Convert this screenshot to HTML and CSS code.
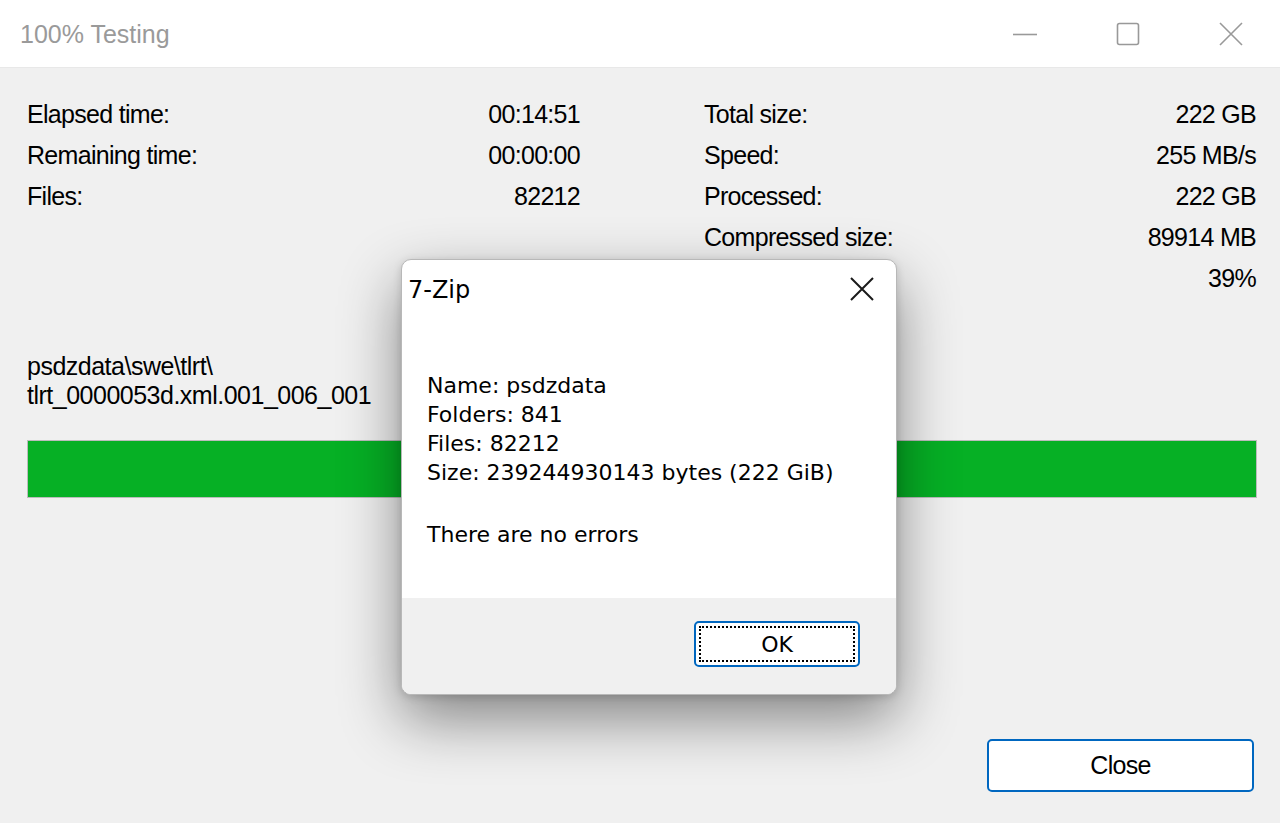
FILE: index.html
```html
<!DOCTYPE html>
<html>
<head>
<meta charset="utf-8">
<link rel="stylesheet" href="styles.css">
</head>
<body>
<div class="window">
  <div class="titlebar">
    <div class="title">100% Testing</div>
    <div class="controls">
      <span class="ctl">
        <svg width="26" height="26" viewBox="0 0 26 26"><line x1="1" y1="13.5" x2="25" y2="13.5" stroke="#999" stroke-width="1.6"/></svg>
      </span>
      <span class="ctl">
        <svg width="26" height="26" viewBox="0 0 26 26"><rect x="2.5" y="2.5" width="21" height="21" rx="2" fill="none" stroke="#999" stroke-width="1.6"/></svg>
      </span>
      <span class="ctl">
        <svg width="26" height="26" viewBox="0 0 26 26"><path d="M2 2 L24 24 M24 2 L2 24" stroke="#999" stroke-width="1.6" fill="none"/></svg>
      </span>
    </div>
  </div>
  <div class="content">
    <div class="stats">
      <div class="col">
        <div class="row"><span>Elapsed time:</span><span>00:14:51</span></div>
        <div class="row"><span>Remaining time:</span><span>00:00:00</span></div>
        <div class="row"><span>Files:</span><span>82212</span></div>
      </div>
      <div class="col">
        <div class="row"><span>Total size:</span><span>222 GB</span></div>
        <div class="row"><span>Speed:</span><span>255 MB/s</span></div>
        <div class="row"><span>Processed:</span><span>222 GB</span></div>
        <div class="row"><span>Compressed size:</span><span>89914 MB</span></div>
        <div class="row"><span></span><span>39%</span></div>
      </div>
    </div>
    <div class="path">psdzdata\swe\tlrt\<br>tlrt_0000053d.xml.001_006_001</div>
    <div class="progress"><div class="fill"></div></div>
    <div class="footer">
      <button class="btn close-btn">Close</button>
    </div>
  </div>
</div>

<div class="dialog">
  <div class="dlg-title">
    <span class="dlg-name">7-Zip</span>
    <svg class="dlg-x" width="26" height="26" viewBox="0 0 26 26"><path d="M2 2 L24 24 M24 2 L2 24" stroke="#1a1a1a" stroke-width="2" fill="none"/></svg>
  </div>
  <div class="dlg-body">
    <div>Name: psdzdata</div>
    <div>Folders: 841</div>
    <div>Files: 82212</div>
    <div>Size: 239244930143 bytes (222 GiB)</div>
    <div class="msg">There are no errors</div>
  </div>
  <div class="dlg-footer">
    <button class="btn ok-btn"><span class="focus">OK</span></button>
  </div>
</div>
</body>
</html>
```

FILE: styles.css
```css
html, body {
  margin: 0;
  padding: 0;
}
body {
  width: 1280px;
  height: 823px;
  overflow: hidden;
  font-family: "Liberation Sans", Arial, sans-serif;
  background: #f0f0f0;
  position: relative;
}
.window {
  display: flex;
  flex-direction: column;
  height: 823px;
}
.titlebar {
  height: 67px;
  background: #ffffff;
  border-bottom: 1px solid #e8e8e8;
  display: flex;
  align-items: center;
  justify-content: space-between;
  padding-left: 20px;
}
.title {
  font-size: 25px;
  color: #9a9a9a;
  margin-top: 1px;
}
.controls {
  display: flex;
  align-items: center;
  gap: 77px;
  padding-right: 36px;
}
.ctl {
  width: 26px;
  height: 26px;
  display: block;
}
.ctl svg { display: block; }
.content {
  flex: 1;
  background: #f0f0f0;
  padding: 26px 24px 0 27px;
  display: flex;
  flex-direction: column;
  font-size: 25px;
  letter-spacing: -0.7px;
  color: #000;
}
.stats {
  display: grid;
  grid-template-columns: 553px 552px;
  column-gap: 124px;
}
.row {
  height: 41px;
  line-height: 41px;
  display: flex;
  justify-content: space-between;
  white-space: nowrap;
}
.path {
  margin-top: 53px;
  line-height: 29px;
  letter-spacing: -0.5px;
}
.progress {
  margin-top: 30px;
  width: 1230px;
  height: 58px;
  box-sizing: border-box;
  border: 1px solid #bcbcbc;
  background: #e6e6e6;
}
.fill {
  height: 100%;
  width: 100%;
  background: #06b025;
}
.footer {
  display: flex;
  justify-content: flex-end;
  margin-top: 241px;
  padding-right: 2px;
}
.btn {
  font-family: "Liberation Sans", Arial, sans-serif;
  background: #ffffff;
  border: 2px solid #0067c0;
  border-radius: 5px;
  color: #000;
  padding: 0;
  cursor: default;
}
.close-btn {
  width: 267px;
  height: 53px;
  font-size: 25px;
  letter-spacing: -0.7px;
}

/* dialog overlay */
.dialog {
  position: absolute;
  left: 401px;
  top: 259px;
  width: 496px;
  height: 436px;
  box-sizing: border-box;
  border: 1px solid #b8b8b8;
  border-radius: 10px;
  background: #ffffff;
  box-shadow: 0 24px 60px rgba(0, 0, 0, 0.45), 0 2px 8px rgba(0, 0, 0, 0.15);
  display: flex;
  flex-direction: column;
  overflow: hidden;
  font-family: "DejaVu Sans", Verdana, sans-serif;
  color: #000;
}
.dlg-title {
  height: 58px;
  display: flex;
  align-items: center;
  justify-content: space-between;
  padding: 0 21px 0 6px;
}
.dlg-name {
  font-size: 24px;
  margin-top: 2px;
}
.dlg-x { display: block; margin-top: -1px; }
.dlg-body {
  flex: 1;
  padding: 53px 0 0 25px;
  font-size: 22px;
  line-height: 29px;
}
.msg {
  margin-top: 33px;
}
.dlg-footer {
  height: 96px;
  background: #f0f0f0;
  display: flex;
  justify-content: flex-end;
  align-items: flex-start;
  padding: 23px 36px 0 0;
  box-sizing: border-box;
}
.ok-btn {
  width: 166px;
  height: 46px;
  font-family: "DejaVu Sans", Verdana, sans-serif;
  font-size: 22px;
  position: relative;
  display: flex;
  padding: 3px;
  box-sizing: border-box;
}
.focus {
  flex: 1;
  border: 2px dotted #000;
  display: flex;
  align-items: center;
  justify-content: center;
}
```
